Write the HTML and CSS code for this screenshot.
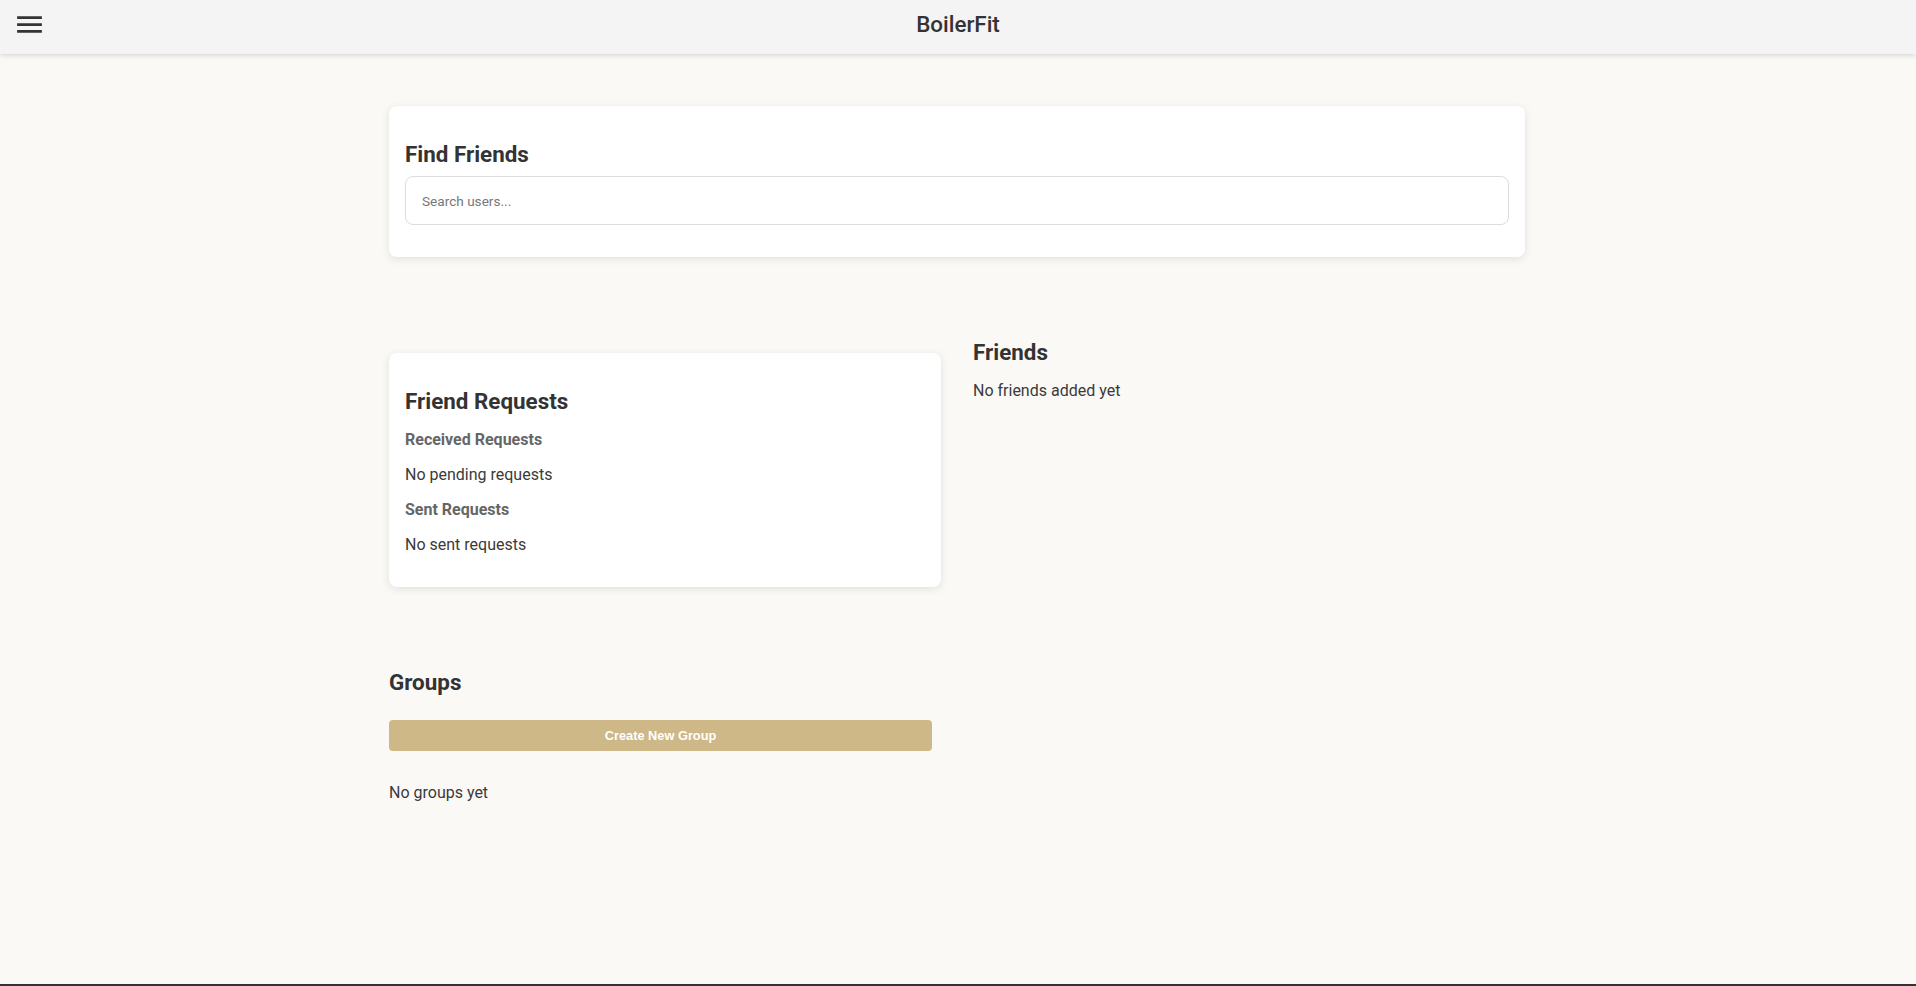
FILE: index.html
```html
<!DOCTYPE html>
<html lang="en">
<head>
<meta charset="utf-8">
<title>BoilerFit</title>
<link rel="stylesheet" href="styles.css">
</head>
<body>
<div class="page">
  <header class="topbar">
    <button class="menu-btn" aria-label="menu">
      <svg class="menu-icon" viewBox="0 0 24 24" width="33" height="33"><path d="M3 18h18v-2H3v2zm0-5h18v-2H3v2zm0-7v2h18V6H3z" fill="#333"/></svg>
    </button>
    <div class="brand">BoilerFit</div>
    <div class="spacer"></div>
  </header>
  <main class="content">
    <section class="card find-card">
      <h2 class="card-title">Find Friends</h2>
      <input class="search" type="text" placeholder="Search users...">
    </section>
    <div class="social-grid">
      <section class="card requests-card">
        <h2 class="card-title">Friend Requests</h2>
        <h3 class="sub-title">Received Requests</h3>
        <p class="muted-line">No pending requests</p>
        <h3 class="sub-title">Sent Requests</h3>
        <p class="muted-line last">No sent requests</p>
      </section>
      <section class="friends-col">
        <h2 class="section-title">Friends</h2>
        <p class="muted-line">No friends added yet</p>
      </section>
    </div>
    <section class="groups">
      <h2 class="section-title">Groups</h2>
      <button class="create-btn">Create New Group</button>
      <p class="muted-line groups-empty">No groups yet</p>
    </section>
  </main>
  <div class="bottom-line"></div>
</div>
</body>
</html>
```
FILE: styles.css
```css
* { box-sizing: border-box; }
html, body { margin: 0; padding: 0; }
body {
  font-family: Roboto, "Noto Sans", Arial, sans-serif;
  color: #3a3a3a;
  background: #faf9f6;
}
.page {
  min-height: 100vh;
  display: flex;
  flex-direction: column;
}
.topbar {
  height: 54px;
  background: #f4f4f4;
  box-shadow: 0 2px 4px rgba(0,0,0,0.12);
  display: grid;
  grid-template-columns: 1fr auto 1fr;
  align-items: center;
  padding: 0 13px 6px 13px;
  position: relative;
  z-index: 2;
}
.menu-btn {
  background: none;
  border: 0;
  padding: 0;
  width: 33px;
  height: 33px;
  display: block;
  cursor: pointer;
}
.menu-icon { display: block; }
.brand {
  font-size: 22.4px;
  line-height: 28px;
  color: #333;
  font-weight: 500;
}
.content {
  flex: 1;
  width: 1136px;
  margin-left: calc(50% - 569px);
  padding-top: 52px;
}
.card {
  background: #fff;
  border-radius: 8px;
  box-shadow: 0 2px 8px rgba(0,0,0,0.10);
  padding: 16px;
}
.card-title, .section-title {
  font-size: 22.4px;
  line-height: 28px;
  font-weight: 700;
  color: #333;
  margin: 18px 0 8px;
}
.search {
  display: block;
  width: 100%;
  height: 49px;
  border: 1px solid #ddd;
  border-radius: 8px;
  padding: 0 16px;
  font-family: Roboto, Arial, sans-serif;
  font-size: 13.6px;
  color: #333;
  background: #fff;
  margin-bottom: 16px;
  outline: none;
}
.search::placeholder { color: #777; }
.social-grid {
  display: grid;
  grid-template-columns: 1fr 1fr;
  column-gap: 32px;
  align-items: start;
  margin-top: 32px;
}
.requests-card {
  margin-top: 64px;
}
.requests-card .card-title { margin-bottom: 0; }
.sub-title {
  font-size: 16px;
  line-height: 20px;
  font-weight: 700;
  color: #666;
  margin: 15px 0 0;
}
.muted-line {
  font-size: 16px;
  line-height: 20px;
  margin: 15px 0 0;
  color: #3a3a3a;
}
.muted-line.last { margin-bottom: 16px; }
.friends-col .section-title { margin: 49px 0 0; }
.groups {
  width: 543px;
  margin-top: 81px;
}
.groups .section-title { margin: 0; }
.create-btn {
  display: block;
  width: 100%;
  height: 31px;
  margin-top: 24px;
  border: 0;
  border-radius: 4px;
  background: #ceb888;
  color: #fff;
  font-family: Arial, "Liberation Sans", sans-serif;
  font-size: 12.8px;
  font-weight: 700;
  cursor: pointer;
}
.groups-empty { margin-top: 32px; }
.bottom-line {
  height: 2px;
  background: #333;
}
```
